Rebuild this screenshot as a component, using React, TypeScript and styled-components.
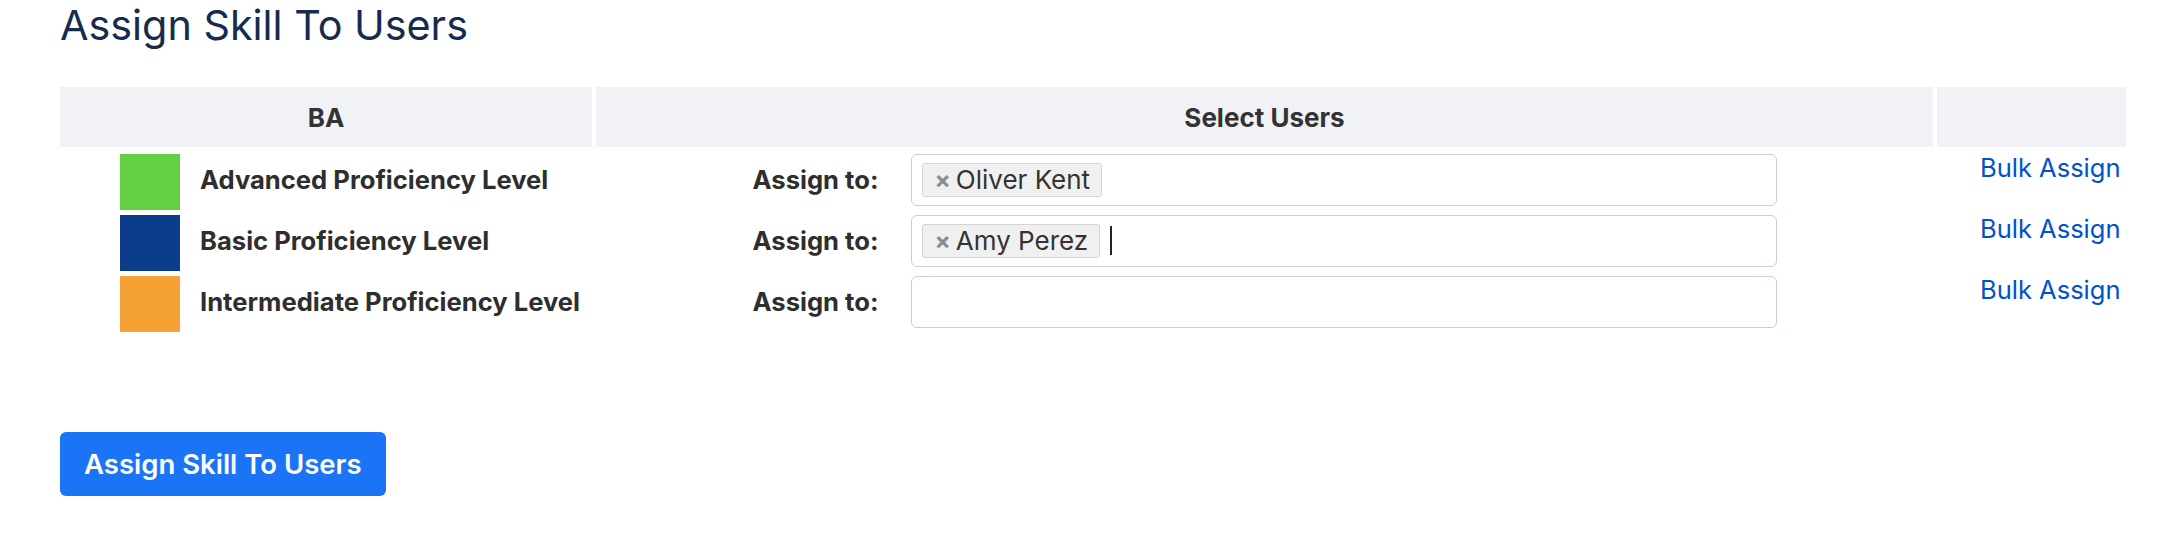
import styled, { createGlobalStyle } from "styled-components";

const GlobalStyle = createGlobalStyle`
  body {
    margin: 0;
    background: #fff;
    font-family: Inter, "Noto Sans", sans-serif;
  }
`

const Page = styled.div`
  padding: 1px 42px 40px 60px;
`

const Title = styled.h1`
  margin: 0 0 38px;
  font-size: 41.3px;
  line-height: 48px;
  font-weight: 400;
  color: #172b4d;
`

const Grid = styled.div`
  display: grid;
  grid-template-columns: 532px 1fr 189px;
  column-gap: 4px;
`

const HeaderCell = styled.div`
  background: #f1f2f6;
  height: 60px;
  display: flex;
  align-items: center;
  justify-content: center;
  font-size: 26px;
  font-weight: 700;
  color: #333;
`

const Body = styled.div`
  padding-top: 2px;
`

const Row = styled(Grid)`
  height: 61px;
`

const LevelCell = styled.div`
  display: flex;
  align-items: center;
  gap: 20px;
  padding-left: 60px;
`

const Swatch = styled.div<{ $color: string }>`
  width: 60px;
  height: 56px;
  flex-shrink: 0;
  align-self: flex-start;
  margin-top: 5px;
  background: ${(p) => p.$color};
`

const LevelName = styled.span`
  font-size: 25.6px;
  font-weight: 700;
  color: #2e2e2e;
`

const AssignCell = styled.div`
  display: flex;
  align-items: center;
  justify-content: center;
`

const AssignLabel = styled.label`
  width: 158px;
  font-size: 25.6px;
  font-weight: 700;
  color: #2e2e2e;
`

const UserPicker = styled.div`
  width: 866px;
  height: 52px;
  box-sizing: border-box;
  border: 1.5px solid #c9ced6;
  border-radius: 6px;
  display: flex;
  align-items: center;
  gap: 10px;
  padding: 0 10px;
`

const Tag = styled.span`
  display: inline-flex;
  align-items: center;
  height: 34px;
  box-sizing: border-box;
  padding: 0 11px 0 12px;
  background: #f0f0f0;
  border: 1px solid #d4d4d4;
  border-radius: 3px;
  font-size: 26px;
  color: #333;
`

const Remove = styled.span`
  color: #8c8c8c;
  font-weight: 700;
  font-size: 24px;
  margin-right: 5px;
`

const Caret = styled.span`
  width: 2px;
  height: 29px;
  background: #222;
`

const BulkCell = styled.div`
  padding-left: 43px;
`

const BulkLink = styled.a`
  font-size: 25.5px;
  line-height: 38px;
  color: #0052cc;
  text-decoration: none;
  cursor: pointer;
`

const Footer = styled.div`
  margin-top: 100px;
`

const SubmitButton = styled.button`
  display: block;
  height: 64px;
  padding: 0 24px;
  border: 0;
  border-radius: 6px;
  background: #1b74f5;
  color: #fff;
  font-family: inherit;
  font-size: 27.5px;
  font-weight: 600;
  cursor: pointer;
`

interface Level {
  name: string,
  color: string,
  users: string[],
  focused?: boolean,
}

const levels: Level[] = [
  { name: "Advanced Proficiency Level", color: "#63cf41", users: ["Oliver Kent"] },
  { name: "Basic Proficiency Level", color: "#0b3d8c", users: ["Amy Perez"], focused: true },
  { name: "Intermediate Proficiency Level", color: "#f5a234", users: [] },
]

const App = () => {
  return (
    <Page>
      <GlobalStyle />
      <Title>Assign Skill To Users</Title>
      <Grid>
        <HeaderCell>BA</HeaderCell>
        <HeaderCell>Select Users</HeaderCell>
        <HeaderCell />
      </Grid>
      <Body>
        {levels.map((level) => (
          <Row key={level.name}>
            <LevelCell>
              <Swatch $color={level.color} />
              <LevelName>{level.name}</LevelName>
            </LevelCell>
            <AssignCell>
              <AssignLabel>Assign to:</AssignLabel>
              <UserPicker>
                {level.users.map((user) => (
                  <Tag key={user}>
                    <Remove>×</Remove>
                    {user}
                  </Tag>
                ))}
                {level.focused && <Caret />}
              </UserPicker>
            </AssignCell>
            <BulkCell>
              <BulkLink>Bulk Assign</BulkLink>
            </BulkCell>
          </Row>
        ))}
      </Body>
      <Footer>
        <SubmitButton>Assign Skill To Users</SubmitButton>
      </Footer>
    </Page>
  )
}

export default App;
